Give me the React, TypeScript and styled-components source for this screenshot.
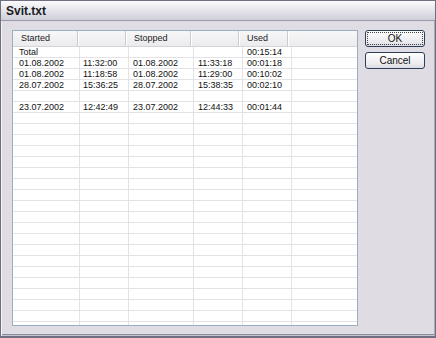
import React from "react";
import styled, { createGlobalStyle } from "styled-components";

const Global = createGlobalStyle`
  html, body { margin: 0; padding: 0; background: #dedde3; }
  body { font-family: "Liberation Sans", Arial, sans-serif; }
`;

const Window = styled.div`
  width: 436px;
  height: 338px;
  box-sizing: border-box;
  display: flex;
  flex-direction: column;
  background: #dfdde3;
  border: 1px solid #6f6f82;
  border-bottom-width: 2px;
  box-shadow: inset 1px 0 0 #a9a9b8, inset -1px 0 0 #a9a9b8, inset 0 -1px 0 #c4c4cf, inset 0 -2px 0 #8c8c9c;
  overflow: hidden;
`;

const TitleBar = styled.div`
  height: 19px;
  flex: none;
  display: flex;
  align-items: center;
  padding-left: 5px;
  background: linear-gradient(#fbfbfc 0%, #e9e9ee 40%, #cfcfd9 100%);
  border-bottom: 1px solid #9a9aab;
  font-weight: bold;
  font-size: 12px;
  color: #1a1a22;
`;

const Body = styled.div`
  flex: 1;
  min-height: 0;
  display: flex;
  gap: 7px;
  padding: 9px 10px 10px 10px;
  border-left: 1px solid #f4f4f7;
`;

const ListView = styled.div`
  width: 346px;
  box-sizing: border-box;
  border: 1px solid #9badc4;
  background: #fff;
  overflow: hidden;
  display: flex;
  flex-direction: column;
`;

const HeaderRow = styled.div`
  display: grid;
  grid-template-columns: 66px 48px 65px 48px 49px 1fr;
  height: 15px;
  background: linear-gradient(#f7f7f8, #ebebee);
  border-bottom: 1px solid #d4d4da;
  flex: none;
`;

const HeaderCell = styled.div<{ $pad: number; $last?: boolean }>`
  font-size: 9px;
  color: #222;
  line-height: 15px;
  padding-left: ${(p) => p.$pad}px;
  white-space: nowrap;
  box-shadow: ${(p) => (p.$last ? "none" : "inset -1px 0 0 #fff, inset -2px 0 0 #c9c9d0")};
`;

const Rows = styled.div`
  flex: 1;
  display: flex;
  flex-direction: column;
`;

const Row = styled.div`
  display: grid;
  grid-template-columns: 67px 49px 65px 49px 49px 1fr;
  height: 11px;
  flex: none;
  box-shadow: inset 0 -1px 0 #e3e3e7;
`;

const Cell = styled.div<{ $pad: number; $last?: boolean }>`
  font-size: 9px;
  line-height: 10px;
  color: #111;
  padding-left: ${(p) => p.$pad}px;
  white-space: nowrap;
  overflow: hidden;
  box-shadow: ${(p) => (p.$last ? "none" : "inset -1px 0 0 #e3e3e7")};
`;

const Buttons = styled.div`
  display: flex;
  flex-direction: column;
  gap: 5px;
`;

const Button = styled.button<{ $focus?: boolean }>`
  width: 60px;
  height: 17px;
  box-sizing: border-box;
  border: 1px solid #2c3e58;
  border-radius: 3px;
  background: linear-gradient(#fefefe, #ecebef 70%, #dcdbe2);
  font-family: "Liberation Sans", Arial, sans-serif;
  font-size: 10px;
  color: #111;
  padding: 0;
  position: relative;
  ${(p) =>
    p.$focus
      ? `&::after { content: ""; position: absolute; inset: 1px; border: 1px dotted #444; border-radius: 1px; }`
      : ""}
`;

const cols = [
  { pad: 6 },
  { pad: 3 },
  { pad: 4 },
  { pad: 4 },
  { pad: 4 },
  { pad: 4 },
];

const data: string[][] = [
  ["Total", "", "", "", "00:15:14", ""],
  ["01.08.2002", "11:32:00", "01.08.2002", "11:33:18", "00:01:18", ""],
  ["01.08.2002", "11:18:58", "01.08.2002", "11:29:00", "00:10:02", ""],
  ["28.07.2002", "15:36:25", "28.07.2002", "15:38:35", "00:02:10", ""],
  ["", "", "", "", "", ""],
  ["23.07.2002", "12:42:49", "23.07.2002", "12:44:33", "00:01:44", ""],
];

const totalRows = 26;

export default function App() {
  const rows = Array.from({ length: totalRows }, (_, i) => data[i] ?? ["", "", "", "", "", ""]);
  const headers = ["Started", "", "Stopped", "", "Used", ""];
  const hpads = [8, 4, 7, 4, 7, 4];
  return (
    <>
      <Global />
      <Window>
        <TitleBar>Svit.txt</TitleBar>
        <Body>
          <ListView>
            <HeaderRow>
              {headers.map((h, i) => (
                <HeaderCell key={i} $pad={hpads[i]} $last={i === 5}>
                  {h}
                </HeaderCell>
              ))}
            </HeaderRow>
            <Rows>
              {rows.map((r, ri) => (
                <Row key={ri}>
                  {r.map((c, ci) => (
                    <Cell key={ci} $pad={cols[ci].pad} $last={ci === 5}>
                      {c}
                    </Cell>
                  ))}
                </Row>
              ))}
            </Rows>
          </ListView>
          <Buttons>
            <Button $focus>OK</Button>
            <Button>Cancel</Button>
          </Buttons>
        </Body>
      </Window>
    </>
  );
}
